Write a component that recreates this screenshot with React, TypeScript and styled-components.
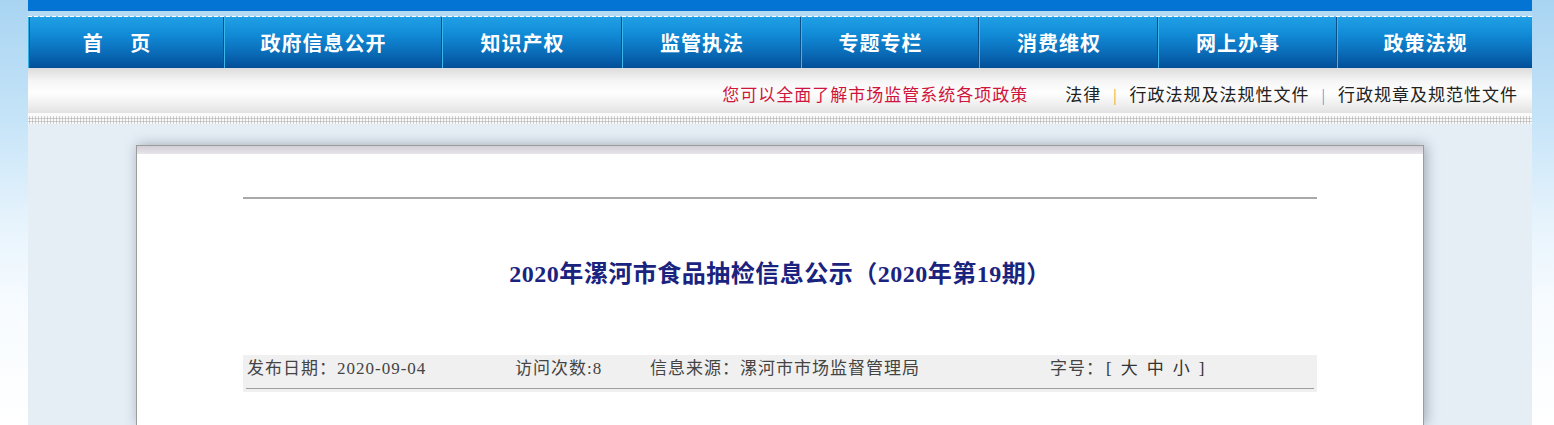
import React from "react";
import styled, { createGlobalStyle } from "styled-components";

const GlobalStyle = createGlobalStyle`
  html, body {
    margin: 0;
    padding: 0;
  }
  body {
    width: 1554px;
    min-height: 425px;
    overflow: hidden;
    background: linear-gradient(to bottom, #a8d4f2 0px, #c6e4f8 120px, #e6f3fc 220px, #f6fbff 300px, #ffffff 425px);
    font-family: "Liberation Serif", "Noto Sans CJK SC", serif;
  }
`;

const Page = styled.div`
  margin-left: 28px;
  width: 1504px;
  min-height: 425px;
  background: #e5edf5;
  display: flex;
  flex-direction: column;
`;

const TopBar = styled.div`
  height: 11px;
  background: #0474d4;
`;

const TopBand = styled.div`
  height: 5px;
  background: #b4daf4;
`;

const DashLine = styled.div`
  height: 1px;
  background: repeating-linear-gradient(90deg, #ffffff 0 4px, #7cc0ee 4px 6px);
`;

const Nav = styled.nav`
  display: grid;
  grid-template-columns: 195px 218px 180px 179px 178px 179px 179px 196px;
  height: 51px;
  background: linear-gradient(to bottom, #1fa0e6 0%, #118ad6 35%, #0a6cb8 70%, #034e98 100%);
`;

const NavItem = styled.a<{ $first?: boolean }>`
  display: flex;
  align-items: center;
  justify-content: center;
  padding-right: 18px;
  border-left: 1px solid ${(p) => (p.$first ? "#2fb0e4" : "#0b4f86")};
  box-shadow: inset 1px 0 0 ${(p) => (p.$first ? "#0b5f96" : "#3bb6e8")};
  color: #ffffff;
  font-family: "Noto Sans CJK SC", sans-serif;
  font-weight: 700;
  font-size: 20px;
  letter-spacing: 1px;
  text-decoration: none;
  white-space: pre;
`;

const SubBar = styled.div`
  height: 45px;
  box-sizing: border-box;
  padding: 18px 14px 0 0;
  display: flex;
  justify-content: flex-end;
  align-items: flex-start;
  background: linear-gradient(to bottom, #dcdcdc 0%, #f6f6f6 30%, #fefefe 55%, #f0f0f0 80%, #e2e2e2 100%);
  font-size: 17px;
  line-height: 20px;
  letter-spacing: 1px;
`;

const SubGap = styled.div`
  height: 3px;
  background: #fbfbfb;
`;

const Dots = styled.div`
  height: 8px;
  background-color: #fafafa;
  background-image: radial-gradient(circle, #bdbdbd 0.9px, transparent 1.3px);
  background-size: 3px 3px;
  background-position: 0 1px;
`;

const Tagline = styled.span`
  color: #d0143c;
  margin-right: 37px;
`;

const SubLink = styled.a`
  color: #222222;
  text-decoration: none;
`;

const Sep = styled.span<{ $color: string }>`
  color: ${(p) => p.$color};
  margin: 0 12px 0 12px;
`;

const Content = styled.main`
  flex: 1;
  display: flex;
  flex-direction: column;
  padding: 21px 108px 0 108px;
`;

const Card = styled.article`
  flex: 1;
  background: #ffffff;
  border: 1px solid #9c9c9c;
  border-bottom: none;
  box-shadow: 2px 0 12px rgba(70, 80, 95, 0.45);
  display: flex;
  flex-direction: column;
`;

const CardStrip = styled.div`
  height: 8px;
  background: linear-gradient(to bottom, #d3cfd8, #e7e4ea);
`;

const CardBody = styled.div`
  width: 1074px;
  margin: 0 auto;
  padding-top: 43px;
`;

const Rule = styled.div`
  height: 2px;
  background: #a9a9a9;
`;

const Title = styled.h1`
  margin: 50px 0 0 0;
  height: 50px;
  line-height: 50px;
  text-align: center;
  color: #1a237e;
  font-size: 24px;
  font-weight: 700;
  letter-spacing: 0.5px;
  font-family: "Liberation Serif", "Noto Sans CJK SC", serif;
`;

const InfoBar = styled.div`
  margin-top: 56px;
  background: #f0f0f0;
  padding: 0 3px 3px 3px;
`;

const InfoRow = styled.div`
  display: grid;
  grid-template-columns: 268px 135px 400px auto;
  line-height: 28px;
  padding: 0 0 5px 1px;
  border-bottom: 1px solid #9e9e9e;
  color: #444444;
  font-size: 17px;
  letter-spacing: 1px;
`;

const InfoItem = styled.span`
  white-space: nowrap;
`;

const SizeSwitch = styled.span`
  display: inline-flex;
  gap: 8px;
  margin-left: 2px;
  color: #333333;
`;

const SizeLink = styled.a`
  color: #333333;
  text-decoration: none;
`;

const navItems = ["首 　页", "政府信息公开", "知识产权", "监管执法", "专题专栏", "消费维权", "网上办事", "政策法规"];

export default function App() {
  return (
    <>
      <GlobalStyle />
      <Page>
        <TopBar />
        <TopBand />
        <DashLine />
        <Nav>
          {navItems.map((item, i) => (
            <NavItem key={item} $first={i === 0} href="#">
              {item}
            </NavItem>
          ))}
        </Nav>
        <SubBar>
          <Tagline>您可以全面了解市场监管系统各项政策</Tagline>
          <SubLink href="#">法律</SubLink>
          <Sep $color="#f09a30">|</Sep>
          <SubLink href="#">行政法规及法规性文件</SubLink>
          <Sep $color="#4fa3e0">|</Sep>
          <SubLink href="#">行政规章及规范性文件</SubLink>
        </SubBar>
        <SubGap />
        <Dots />
        <Content>
          <Card>
            <CardStrip />
            <CardBody>
              <Rule />
              <Title>2020年漯河市食品抽检信息公示（2020年第19期）</Title>
              <InfoBar>
                <InfoRow>
                  <InfoItem>发布日期：2020-09-04</InfoItem>
                  <InfoItem>访问次数:8</InfoItem>
                  <InfoItem>信息来源：漯河市市场监督管理局</InfoItem>
                  <InfoItem>
                    字号：
                    <SizeSwitch>
                      <span>[</span>
                      <SizeLink href="#">大</SizeLink>
                      <SizeLink href="#">中</SizeLink>
                      <SizeLink href="#">小</SizeLink>
                      <span>]</span>
                    </SizeSwitch>
                  </InfoItem>
                </InfoRow>
              </InfoBar>
            </CardBody>
          </Card>
        </Content>
      </Page>
    </>
  );
}
